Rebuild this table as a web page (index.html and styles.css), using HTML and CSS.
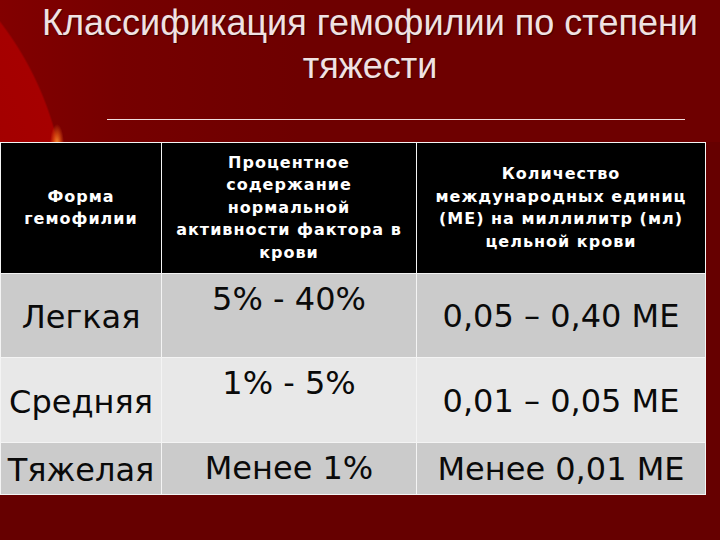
FILE: index.html
```html
<!DOCTYPE html>
<html lang="ru">
<head>
<meta charset="utf-8">
<title>Классификация гемофилии</title>
<link rel="stylesheet" href="styles.css">
</head>
<body>
<div class="slide">
  <h1 class="title">Классификация гемофилии по степени<br>тяжести</h1>
  <div class="rule"></div>
  <table class="grid">
    <colgroup>
      <col class="c1"><col class="c2"><col class="c3">
    </colgroup>
    <thead>
      <tr class="head">
        <th>Форма<br>гемофилии</th>
        <th>Процентное<br>содержание<br>нормальной<br>активности фактора в<br>крови</th>
        <th>Количество<br>международных единиц<br>(МЕ) на миллилитр (мл)<br>цельной крови</th>
      </tr>
    </thead>
    <tbody>
      <tr class="r1 dark">
        <td class="name">Легкая</td>
        <td class="pct">5% - 40%</td>
        <td class="me">0,05 – 0,40 МЕ</td>
      </tr>
      <tr class="r2 light">
        <td class="name">Средняя</td>
        <td class="pct">1% - 5%</td>
        <td class="me">0,01 – 0,05 МЕ</td>
      </tr>
      <tr class="r3 dark">
        <td class="name">Тяжелая</td>
        <td class="mid">Менее 1%</td>
        <td class="me">Менее 0,01 МЕ</td>
      </tr>
    </tbody>
  </table>
</div>
</body>
</html>
```
FILE: styles.css
```css
html, body {
  margin: 0;
  padding: 0;
}
body {
  width: 720px;
  height: 540px;
  overflow: hidden;
  background: #660000;
}
.slide {
  width: 720px;
  height: 540px;
  background:
    radial-gradient(ellipse 7px 20px at 57px 144px, #f58a30 0, rgba(230,90,20,0.7) 50%, rgba(200,40,0,0) 100%),
    radial-gradient(circle at -250px 215px, #980000 0, #a60000 315px, rgba(166,0,0,0) 317px),
    linear-gradient(90deg, #820000 0, #760000 120px, #6e0000 300px),
    #660000;
  background-size: auto, auto, 100% 142px, auto;
  background-repeat: no-repeat;
  padding-top: 1px;
  box-sizing: border-box;
}
.title {
  margin: 0 0 0 40px;
  width: 660px;
  text-align: center;
  font-family: "Liberation Sans", Arial, sans-serif;
  font-weight: normal;
  font-size: 36px;
  line-height: 43px;
  color: #f0e2e2;
  text-shadow: 1px 1px 1px #3a0000;
}
.rule {
  margin: 32px 0 0 107px;
  width: 578px;
  height: 1px;
  background: #f0dede;
}
.grid {
  margin-top: 22px;
  border-collapse: collapse;
  table-layout: fixed;
  width: 705px;
}
.c1 { width: 161px; }
.c2 { width: 255px; }
.c3 { width: 289px; }
.grid th, .grid td {
  border: 1px solid #f4f4f4;
  padding: 0;
  text-align: center;
  font-family: "DejaVu Sans", Verdana, sans-serif;
}
.grid th {
  background: #000;
  color: #fff;
  font-weight: bold;
  font-size: 16px;
  letter-spacing: 1px;
  line-height: 22.5px;
  vertical-align: middle;
}
.head { height: 131px; }
.r1 { height: 84px; }
.r2 { height: 85px; }
.r3 { height: 52px; }
.grid td {
  font-size: 32px;
  line-height: 37px;
  color: #0a0a0a;
  vertical-align: middle;
}
.dark td { background: #cbcbcb; }
.light td { background: #e8e8e8; }
.grid td.pct {
  vertical-align: top;
  padding-top: 7px;
}
.grid td.name { padding-top: 4px; }
.grid td.me { padding-top: 2px; }
```
